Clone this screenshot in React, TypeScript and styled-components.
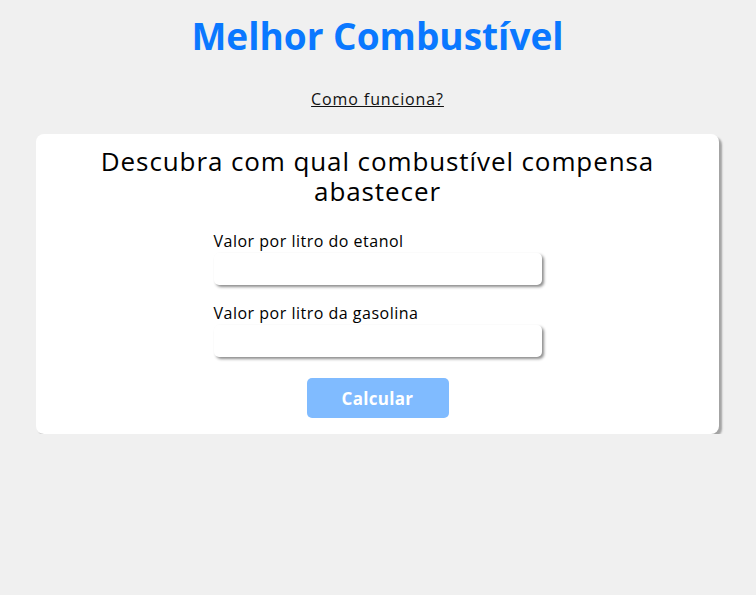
import React from "react";
import styled, { createGlobalStyle } from "styled-components";

const Global = createGlobalStyle`
  html, body { margin: 0; padding: 0; background: #f0f0f0; }
  body { font-family: "Open Sans", "Noto Sans", sans-serif; color: #000; }
  * { box-sizing: border-box; }
`;

const Page = styled.main`
  display: flex;
  flex-direction: column;
  align-items: center;
  padding: 13px 37px 0 36px;
`;

const Title = styled.h1`
  margin: 0;
  font-size: 37px;
  font-weight: 700;
  color: #0a78ff;
  line-height: 46px;
`;

const HowLink = styled.a`
  margin-top: 30px;
  font-size: 16px;
  letter-spacing: 0.9px;
  color: #111;
  text-decoration: underline;
  line-height: 20px;
  cursor: pointer;
`;

const Card = styled.section`
  margin-top: 25px;
  width: 100%;
  background: #fff;
  border-radius: 8px;
  box-shadow: 3px 3px 2px rgba(0, 0, 0, 0.32);
  padding: 12px 40px 16px;
  display: flex;
  flex-direction: column;
  align-items: center;
`;

const CardTitle = styled.h2`
  margin: 0;
  font-size: 26px;
  font-weight: 400;
  letter-spacing: 0.9px;
  line-height: 30px;
  text-align: center;
  max-width: 580px;
`;

const Form = styled.form`
  margin-top: 26px;
  width: 328px;
  display: flex;
  flex-direction: column;
`;

const Field = styled.label`
  display: flex;
  flex-direction: column;
  gap: 3px;
  font-size: 16px;
  letter-spacing: 0.5px;
  line-height: 18px;
  margin-bottom: 19px;
`;

const Input = styled.input`
  height: 32px;
  border: none;
  border-radius: 5px;
  background: #fff;
  box-shadow: 2px 2px 3px rgba(0, 0, 0, 0.45);
  outline: none;
  padding: 0 8px;
  font: inherit;
`;

const Button = styled.button`
  align-self: center;
  margin-top: 2px;
  width: 142px;
  height: 40px;
  border: none;
  border-radius: 5px;
  background: #80bbff;
  color: #fff;
  font-family: inherit;
  font-size: 17px;
  letter-spacing: 0.3px;
  font-weight: 700;
  cursor: pointer;
`;

export default function App() {
  return (
    <>
      <Global />
      <Page>
        <Title>Melhor Combustível</Title>
        <HowLink>Como funciona?</HowLink>
        <Card>
          <CardTitle>Descubra com qual combustível compensa abastecer</CardTitle>
          <Form onSubmit={(e) => e.preventDefault()}>
            <Field>
              Valor por litro do etanol
              <Input type="text" />
            </Field>
            <Field>
              Valor por litro da gasolina
              <Input type="text" />
            </Field>
            <Button type="submit">Calcular</Button>
          </Form>
        </Card>
      </Page>
    </>
  );
}
